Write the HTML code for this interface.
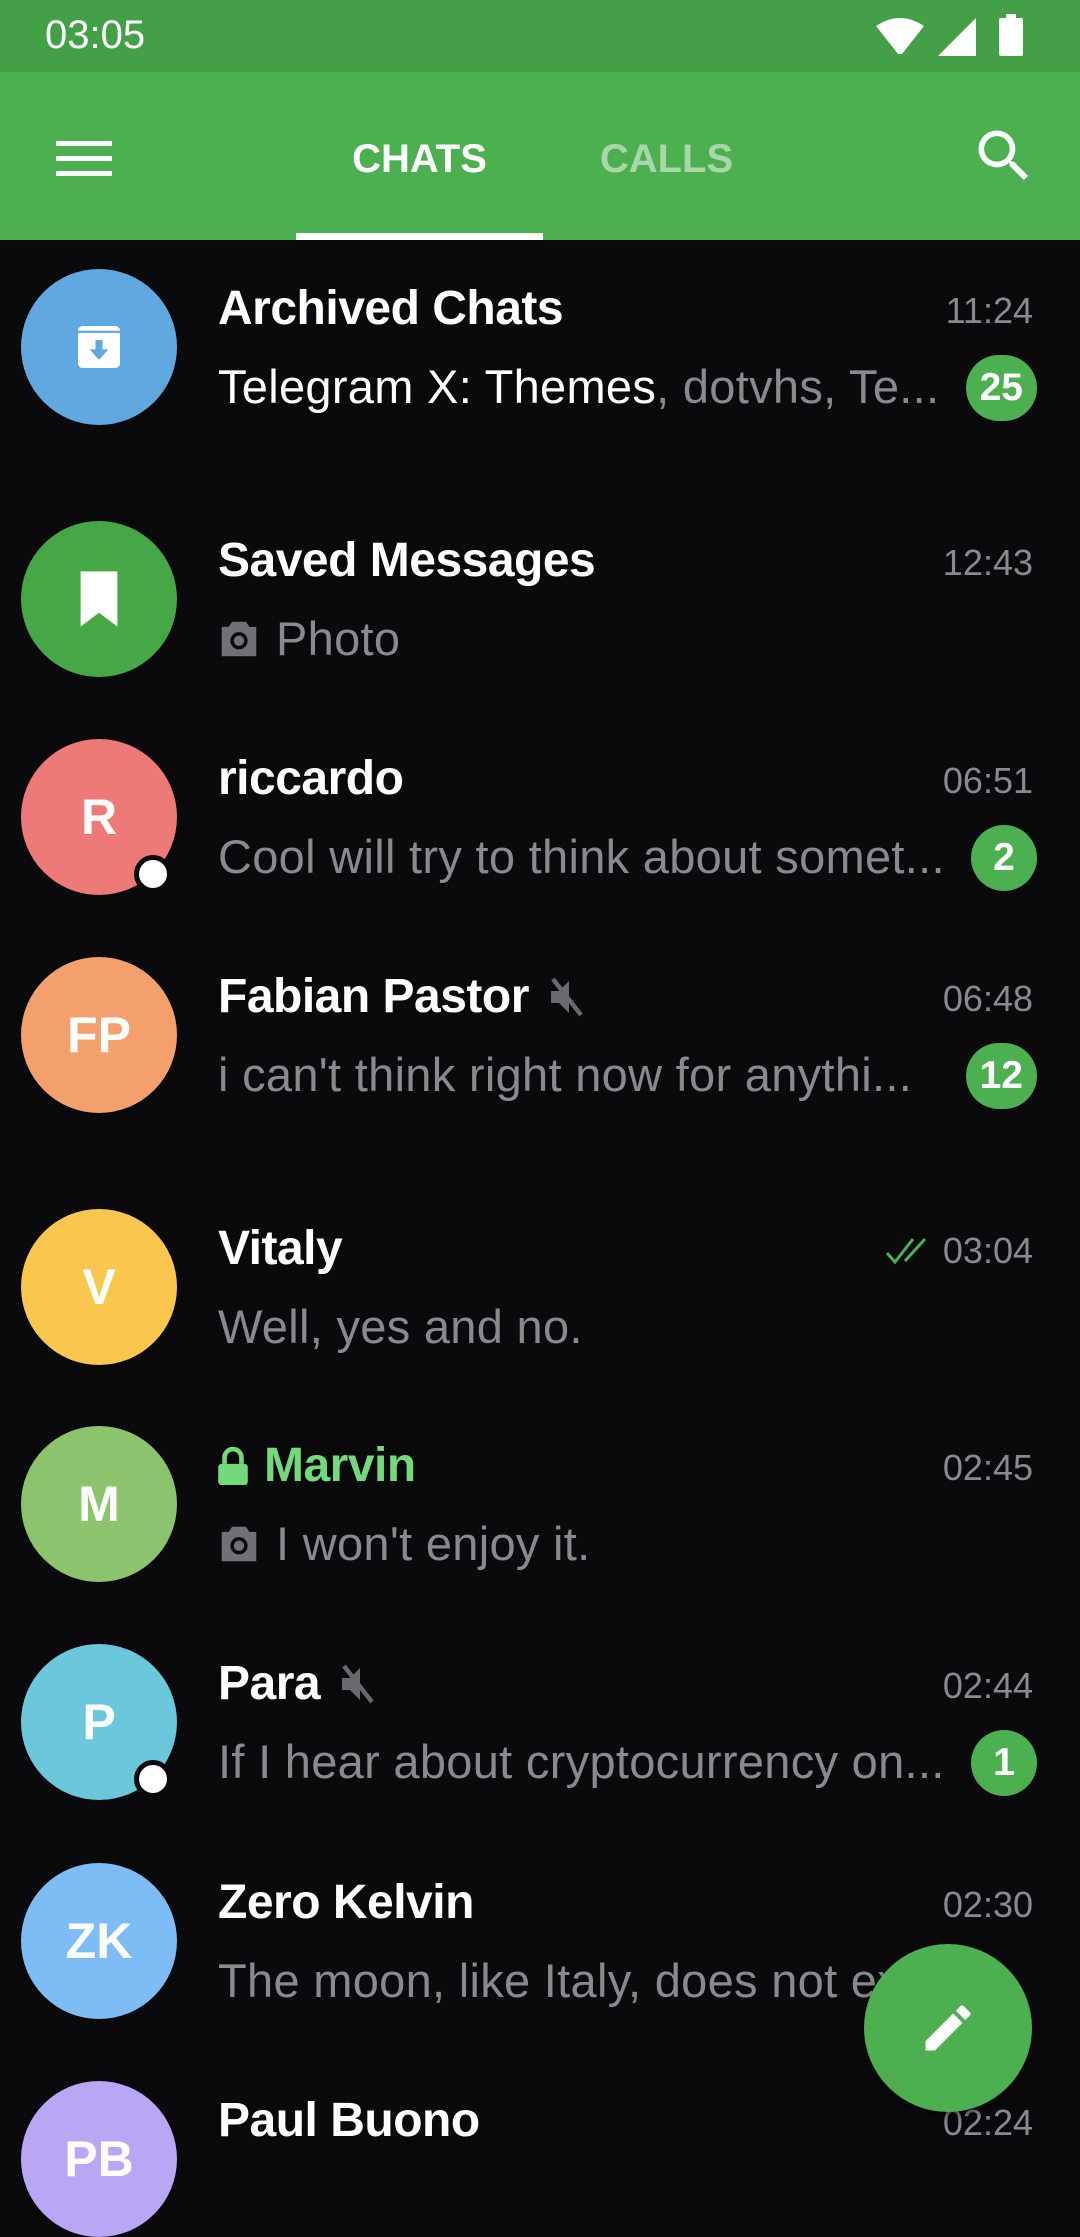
<!DOCTYPE html>
<html><head><meta charset="utf-8"><style>
*{margin:0;padding:0;box-sizing:border-box}
body{width:1080px;height:2160px;background:#0a090b;font-family:"Liberation Sans",sans-serif;position:relative;overflow:hidden;color:#fff}
.sb{position:absolute;left:0;top:0;width:1080px;height:72px;background:#43a047}
.tb{position:absolute;left:0;top:72px;width:1080px;height:168px;background:#4caf50}
.row{position:absolute;left:0;width:1080px;height:156px}
.av{position:absolute;left:21px;top:0;width:156px;height:156px;border-radius:50%;color:#fff;font-weight:bold;font-size:50px;display:flex;align-items:center;justify-content:center}
.nm{position:absolute;left:218px;top:10px;height:60px;line-height:60px;font-size:48px;font-weight:bold;white-space:nowrap;letter-spacing:-0.5px;display:flex;align-items:center}
.ms{position:absolute;left:218px;top:88px;height:60px;line-height:60px;font-size:47px;color:#8a8a8e;white-space:nowrap;overflow:hidden;letter-spacing:0.3px;display:flex;align-items:center}
.tm{position:absolute;right:47px;top:12px;height:60px;line-height:60px;font-size:36px;color:#8a8a8e;display:flex;align-items:center}
.bd{position:absolute;right:43px;top:86px;min-width:66px;height:66px;border-radius:33px;background:#4caf50;color:#fff;font-weight:bold;font-size:39px;line-height:66px;text-align:center;padding:0 14px}
.dot{position:absolute;left:134px;top:116px;width:38px;height:38px;border-radius:50%;background:#fff;border:5px solid #0a090b}
</style></head><body>
<div class="sb">
<div style="position:absolute;left:45px;top:13px;font-size:40px;color:#fff">03:05</div>
<svg style="position:absolute;left:876px;top:18px" width="48" height="38" viewBox="0 0 48 38"><path d="M0 8 Q24 -8 48 8 L26 36 L22 36 Z" fill="#fff"/></svg>
<svg style="position:absolute;left:938px;top:18px" width="38" height="38"><path d="M0 38 L38 0 L38 38 Z" fill="#fff"/></svg>
<svg style="position:absolute;left:999px;top:14px" width="24" height="42"><rect x="7" y="0" width="10" height="5" fill="#fff"/><rect x="0" y="4" width="24" height="38" rx="2" fill="#fff"/></svg>
</div>
<div class="tb">
<div style="position:absolute;left:56px;top:69px;width:56px;height:5px;background:#fff"></div>
<div style="position:absolute;left:56px;top:84px;width:56px;height:5px;background:#fff"></div>
<div style="position:absolute;left:56px;top:99px;width:56px;height:5px;background:#fff"></div>
<div style="position:absolute;left:296px;top:0;width:247px;height:168px;line-height:174px;text-align:center;font-size:40px;font-weight:bold;color:#fff">CHATS</div>
<div style="position:absolute;left:296px;top:161px;width:247px;height:7px;background:#fff"></div>
<div style="position:absolute;left:543px;top:0;width:247px;height:168px;line-height:174px;text-align:center;font-size:40px;font-weight:bold;color:#a8d8a9">CALLS</div>
<svg style="position:absolute;left:970px;top:50px" width="68" height="68" viewBox="0 0 24 24"><path fill="#fff" d="M15.5 14h-.79l-.28-.27A6.47 6.47 0 0 0 16 9.5 6.5 6.5 0 1 0 9.5 16c1.61 0 3.090-.59 4.23-1.570l.27.28v.79l5 4.99L20.49 19l-4.99-5zm-6 0C7.01 14 5 11.99 5 9.5S7.01 5 9.5 5 14 7.01 14 9.5 11.99 14 9.5 14z"/></svg>
</div>

<div class="row" style="top:269px">
<div class="av" style="background:#61a8e1"><svg width="56" height="56" viewBox="0 0 24 24"><rect x="3" y="3" width="18" height="18" rx="2" fill="#fff"/><rect x="3" y="5" width="18" height="1" fill="#61a8e1"/><path d="M10.5 9h3v4h2.5l-4 4.5-4-4.5h2.5z" fill="#61a8e1"/></svg></div>
<div class="nm">Archived Chats</div><div class="tm">11:24</div>
<div class="ms" style="width:735px"><span style="color:#fff">Telegram X: Themes</span>, dotvhs, Te...</div>
<div class="bd">25</div>
</div>

<div class="row" style="top:521px">
<div class="av" style="background:#45a745"><svg width="46" height="56" viewBox="0 0 20 24"><path d="M2 0h16v24l-8-6-8 6z" fill="#fff"/></svg></div>
<div class="nm">Saved Messages</div><div class="tm">12:43</div>
<div class="ms"><svg width="42" height="38" viewBox="0 0 24 22" style="margin-right:16px"><path d="M8 1h8l2 3h4v17H2V4h4z" fill="#707075"/><circle cx="12" cy="12" r="5" fill="#0a090b"/><circle cx="12" cy="12" r="3" fill="#707075"/></svg>Photo</div>
</div>

<div class="row" style="top:739px">
<div class="av" style="background:#ee7a77">R</div><div class="dot"></div>
<div class="nm">riccardo</div><div class="tm">06:51</div>
<div class="ms" style="width:740px">Cool will try to think about somet...</div>
<div class="bd">2</div>
</div>

<div class="row" style="top:957px">
<div class="av" style="background:#f3a06c">FP</div>
<div class="nm">Fabian Pastor<svg width="48" height="48" viewBox="0 0 24 24" style="margin-left:14px"><path d="M4 9h4l5-5v16l-5-5H4z" fill="#6a6a6e"/><path d="M5 3l14 18" stroke="#6a6a6e" stroke-width="2.2"/></svg></div><div class="tm">06:48</div>
<div class="ms" style="width:730px">i can't think right now for anythi...</div>
<div class="bd">12</div>
</div>

<div class="row" style="top:1209px">
<div class="av" style="background:#f9c74e">V</div>
<div class="nm">Vitaly</div><div class="tm"><svg width="48" height="28" viewBox="0 0 48 28" style="margin-right:10px"><path d="M2 16l8 9L28 2M20 24L40 2" stroke="#4caf50" stroke-width="3" fill="none"/></svg>03:04</div>
<div class="ms">Well, yes and no.</div>
</div>

<div class="row" style="top:1426px">
<div class="av" style="background:#8cc46e">M</div>
<div class="nm" style="color:#74d97a"><svg width="30" height="38" viewBox="0 0 14 18" style="margin-right:16px"><path d="M3 8V5a4 4 0 0 1 8 0v3" stroke="#74d97a" stroke-width="2.2" fill="none"/><rect x="0" y="8" width="14" height="10" rx="1.5" fill="#74d97a"/></svg>Marvin</div><div class="tm">02:45</div>
<div class="ms"><svg width="42" height="38" viewBox="0 0 24 22" style="margin-right:16px"><path d="M8 1h8l2 3h4v17H2V4h4z" fill="#707075"/><circle cx="12" cy="12" r="5" fill="#0a090b"/><circle cx="12" cy="12" r="3" fill="#707075"/></svg>I won't enjoy it.</div>
</div>

<div class="row" style="top:1644px">
<div class="av" style="background:#6bc7dc">P</div><div class="dot"></div>
<div class="nm">Para<svg width="48" height="48" viewBox="0 0 24 24" style="margin-left:14px"><path d="M4 9h4l5-5v16l-5-5H4z" fill="#6a6a6e"/><path d="M5 3l14 18" stroke="#6a6a6e" stroke-width="2.2"/></svg></div><div class="tm">02:44</div>
<div class="ms" style="width:745px">If I hear about cryptocurrency on...</div>
<div class="bd">1</div>
</div>

<div class="row" style="top:1863px">
<div class="av" style="background:#7dbcf4">ZK</div>
<div class="nm">Zero Kelvin</div><div class="tm">02:30</div>
<div class="ms" style="width:800px">The moon, like Italy, does not exist...</div>
</div>

<div class="row" style="top:2081px">
<div class="av" style="background:#b9a6f4">PB</div>
<div class="nm">Paul Buono</div><div class="tm">02:24</div>
</div>

<div style="position:absolute;left:864px;top:1944px;width:168px;height:168px;border-radius:50%;background:#4caf50;box-shadow:0 4px 10px rgba(0,0,0,.5);display:flex;align-items:center;justify-content:center">
<svg width="60" height="60" viewBox="0 0 24 24"><path fill="#fff" d="M3 17.25V21h3.75L17.81 9.940l-3.75-3.75L3 17.25zM20.71 7.04a1 1 0 0 0 0-1.41l-2.34-2.34a1 1 0 0 0-1.41 0l-1.83 1.83 3.75 3.75 1.83-1.83z"/></svg>
</div>
</body></html>
